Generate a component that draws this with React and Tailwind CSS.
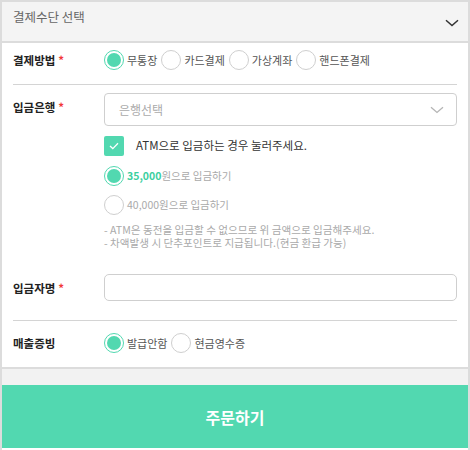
import React from "react";

const font = { fontFamily: '"Noto Sans CJK KR", "Noto Sans", sans-serif' };

function Radio({ checked }) {
  return checked ? (
    <span className="flex h-[20px] w-[20px] shrink-0 items-center justify-center rounded-full border-[1.5px] border-[#52d8b0] bg-white">
      <span className="h-[14px] w-[14px] rounded-full bg-[#52d8b0]" />
    </span>
  ) : (
    <span className="h-[20px] w-[20px] shrink-0 rounded-full border border-[#cfcfcf] bg-white" />
  );
}

function Opt({ checked, label }) {
  return (
    <span className="flex items-center gap-[3px]">
      <Radio checked={checked} />
      <span className="text-[11px] leading-[14px] text-[#555]">{label}</span>
    </span>
  );
}

function Label({ children, req }) {
  return (
    <div className="w-[91px] shrink-0 text-[11.5px] font-bold leading-[18px] text-[#222]">
      {children}
      {req && <span className="ml-[3px] text-[#f23a3a]">*</span>}
    </div>
  );
}

export default function App() {
  return (
    <div style={font} className="h-[450px] w-[470px] overflow-hidden border-x-2 border-[#dcdcdc] bg-white">
      <div className="flex h-[43px] justify-between border-y-2 border-t-[#dcdcdc] border-b-[#dcdcdc] bg-[#f4f4f4] pl-[11px] pr-[9px]">
        <span className="pt-[6px] text-[12.5px] leading-[18px] text-[#666]">결제수단 선택</span>
        <svg className="mt-[17px]" width="14" height="8" viewBox="0 0 14 8">
          <path d="M1 1.2 L7 6.5 L13 1.2" fill="none" stroke="#333" strokeWidth="1.5" />
        </svg>
      </div>
      <div className="px-[11px]">
        <div className="flex items-center pb-[14px] pt-[7px]">
          <Label req>결제방법</Label>
          <div className="flex items-center gap-[4px]">
            <Opt checked label="무통장" />
            <Opt label="카드결제" />
            <Opt label="가상계좌" />
            <Opt label="핸드폰결제" />
          </div>
        </div>
        <div className="h-px bg-[#d4d4d4]" />
        <div className="flex pt-[8px]">
          <div className="pt-[5px]">
            <Label req>입금은행</Label>
          </div>
          <div className="flex flex-1 flex-col">
            <div className="flex h-[33px] items-center justify-between rounded-[4px] border border-[#cfcfcf] pl-[14px] pr-[12px]">
              <span className="text-[12px] text-[#aaa]">은행선택</span>
              <svg width="14" height="8" viewBox="0 0 14 8">
                <path d="M1 1.2 L7 6.5 L13 1.2" fill="none" stroke="#b5b5b5" strokeWidth="1.3" />
              </svg>
            </div>
            <div className="mt-[10px] flex items-center gap-[12px]">
              <span className="flex h-[20px] w-[20px] items-center justify-center rounded-[2px] bg-[#52d8b0]">
                <svg width="10" height="8" viewBox="0 0 10 8">
                  <path d="M1 4 L3.8 6.6 L9 1.3" fill="none" stroke="#fff" strokeWidth="1.3" />
                </svg>
              </span>
              <span className="text-[11.5px] text-[#333]">ATM으로 입금하는 경우 눌러주세요.</span>
            </div>
            <div className="mt-[10px] flex items-center gap-[3px]">
              <Radio checked />
              <span className="text-[10.5px] text-[#aaa]">
                <span className="font-bold text-[#3ccf9f]">35,000</span>원으로 입금하기
              </span>
            </div>
            <div className="mt-[9px] flex items-center gap-[3px]">
              <Radio />
              <span className="text-[10.5px] text-[#aaa]">40,000원으로 입금하기</span>
            </div>
            <div className="mt-[8px] flex flex-col text-[10.6px] leading-[13px] text-[#aaa]">
              <span>- ATM은 동전을 입금할 수 없으므로 위 금액으로 입금해주세요.</span>
              <span>- 차액발생 시 단추포인트로 지급됩니다.(현금 환급 가능)</span>
            </div>
          </div>
        </div>
        <div className="flex items-center pt-[25px] pb-[19px]">
          <Label req>입금자명</Label>
          <div className="h-[27px] flex-1 rounded-[5px] border border-[#cfcfcf]" />
        </div>
        <div className="h-px bg-[#d4d4d4]" />
        <div className="flex items-center pb-[14px] pt-[12px]">
          <Label>매출증빙</Label>
          <div className="flex items-center gap-[4px]">
            <Opt checked label="발급안함" />
            <Opt label="현금영수증" />
          </div>
        </div>
      </div>
      <div className="h-[18px] border-t-2 border-[#dcdcdc] bg-[#f2f2f2]" />
      <div className="flex h-[63px] items-center justify-center bg-[#52d8b0]">
        <span className="text-[16px] font-bold text-white">주문하기</span>
      </div>
    </div>
  );
}
